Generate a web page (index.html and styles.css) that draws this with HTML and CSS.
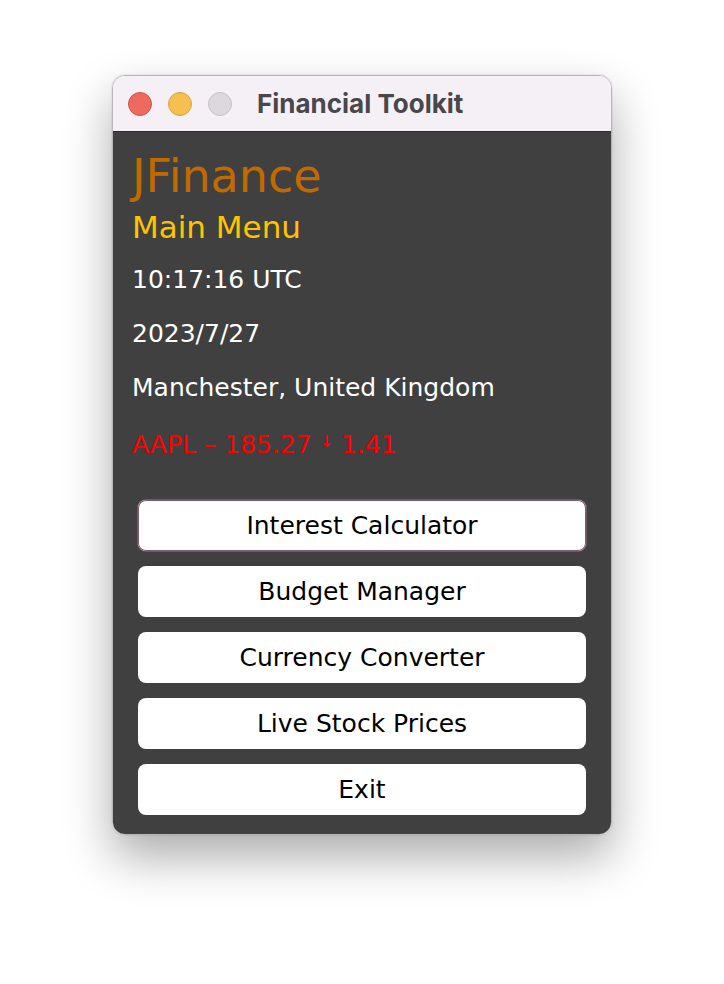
FILE: index.html
```html
<!DOCTYPE html>
<html>
<head>
<meta charset="utf-8">
<link rel="stylesheet" href="styles.css">
</head>
<body>
<div class="window">
  <div class="titlebar">
    <div class="lights">
      <span class="light red"></span>
      <span class="light yellow"></span>
      <span class="light gray"></span>
    </div>
    <div class="title">Financial Toolkit</div>
  </div>
  <div class="content">
    <div class="brand">JFinance</div>
    <div class="subtitle">Main Menu</div>
    <div class="info first">10:17:16 UTC</div>
    <div class="info">2023/7/27</div>
    <div class="info">Manchester, United Kingdom</div>
    <div class="info stock">AAPL – 185.27 <span class="arrow">↓</span> 1.41</div>
    <div class="buttons">
      <button class="btn focused">Interest Calculator</button>
      <button class="btn">Budget Manager</button>
      <button class="btn">Currency Converter</button>
      <button class="btn">Live Stock Prices</button>
      <button class="btn">Exit</button>
    </div>
  </div>
</div>
</body>
</html>
```
FILE: styles.css
```css
html, body {
  margin: 0;
  padding: 0;
  background: #ffffff;
}
body {
  min-height: 984px;
  box-sizing: border-box;
  padding: 75px 0 0 112px;
  font-family: "DejaVu Sans", "Liberation Sans", sans-serif;
}
.window {
  width: 500px;
  box-sizing: border-box;
  border: 1px solid #b9b6ba;
  border-radius: 13px;
  overflow: hidden;
  box-shadow: 0 22px 48px rgba(0,0,0,0.33), 0 0 2px rgba(0,0,0,0.2);
}
.titlebar {
  height: 55px;
  background: #f4f0f6;
  border-bottom: 1px solid #2a2a2a;
  display: flex;
  align-items: center;
  padding-left: 15px;
}
.lights {
  display: flex;
  gap: 16px;
}
.light {
  width: 24px;
  height: 24px;
  border-radius: 50%;
  box-sizing: border-box;
}
.red { background: #ee6a5f; border: 1px solid #d35248; }
.yellow { background: #f5c04f; border: 1px solid #d9a33a; }
.gray { background: #dcd8de; border: 1px solid #c4c0c6; }
.title {
  margin-left: 25px;
  font-family: "Inter", "Liberation Sans", sans-serif;
  font-weight: 700;
  font-size: 26px;
  color: #4a474c;
}
.content {
  background: #404040;
  padding: 16px 25px 19px 19px;
}
.brand {
  font-size: 46px;
  line-height: 56px;
  color: #c06a00;
}
.subtitle {
  margin-top: 1px;
  font-size: 31px;
  line-height: 44px;
  color: #ffc400;
}
.info {
  font-size: 25px;
  line-height: 54px;
  color: #ffffff;
}
.info.first {
  margin-top: 4px;
}
.stock {
  color: #ff0000;
}
.arrow {
  font-size: 16px;
  vertical-align: 6px;
}
.buttons {
  margin-top: 28px;
  margin-left: 6px;
  display: flex;
  flex-direction: column;
  gap: 15px;
}
.btn {
  height: 51px;
  background: #ffffff;
  border: none;
  border-radius: 8px;
  font-family: "DejaVu Sans", "Liberation Sans", sans-serif;
  font-size: 25px;
  color: #000000;
  padding: 0;
}
.btn.focused {
  box-shadow: inset 0 0 0 1px #7d5a70, 0 0 0 1px rgba(160,120,140,0.5);
}
```
